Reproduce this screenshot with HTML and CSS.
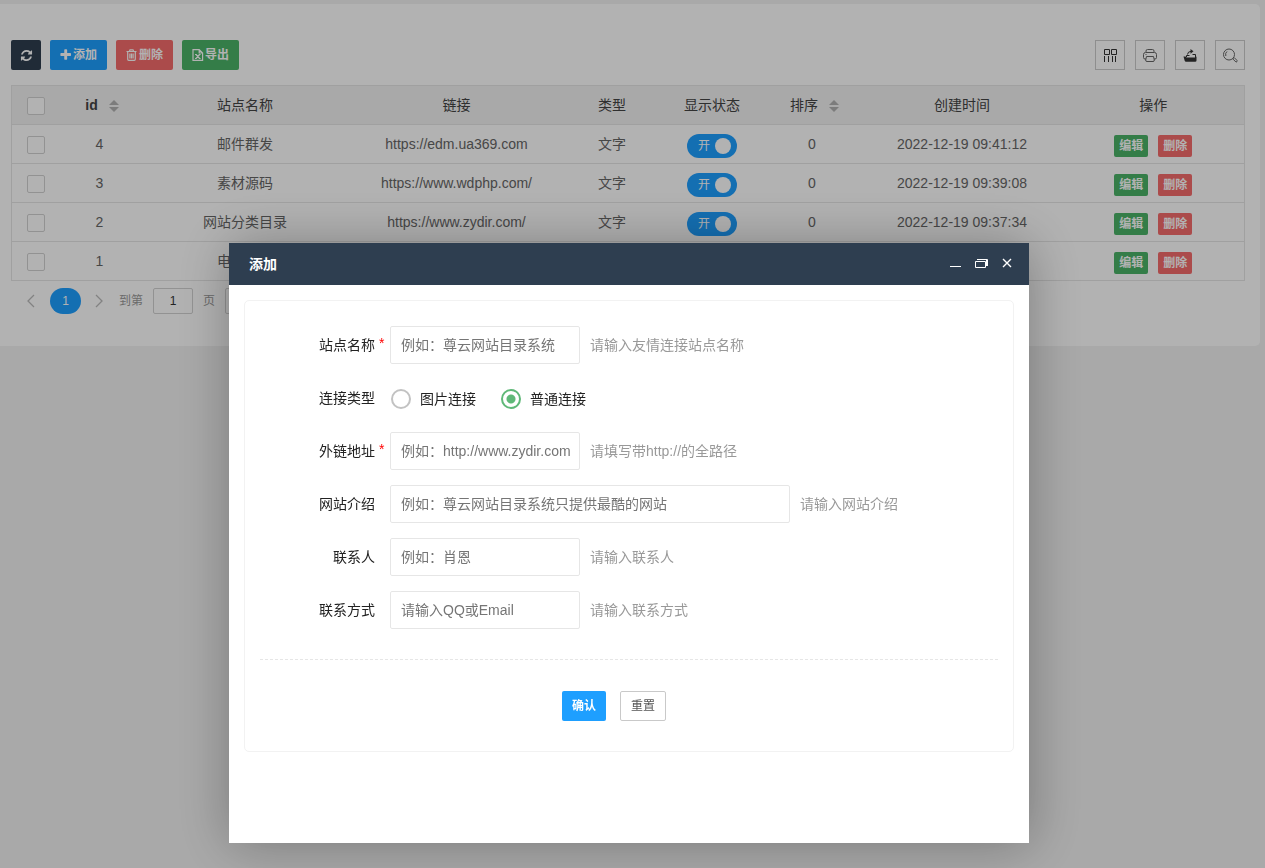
FILE: index.html
```
<!DOCTYPE html>
<html lang="zh-CN">
<head>
<meta charset="utf-8">
<title>添加</title>
<link rel="stylesheet" href="styles.css">
</head>
<body>
<main class="card">
  <div class="toolbar">
    <div class="actions">
      <button class="btn btn-dark" type="button" aria-label="刷新"><svg class="fa" viewBox="0 0 1792 1792"><path d="M1639 1056q0 5-1 7-64 268-268 434.500t-478 166.500q-146 0-282.500-55t-243.500-157l-129 129q-19 19-45 19t-45-19-19-45v-448q0-26 19-45t45-19h448q26 0 45 19t19 45-19 45l-137 137q71 66 161 102t187 36q134 0 250-65t186-179q11-17 53-117 8-23 30-23h192q13 0 22.500 9.500t9.500 22.500zm25-800v448q0 26-19 45t-45 19h-448q-26 0-45-19t-19-45 19-45l138-138q-148-137-349-137-134 0-250 65t-186 179q-11 17-53 117-8 23-30 23h-199q-13 0-22.500-9.500t-9.500-22.500v-7q65-268 270-434.500t480-166.500q146 0 284 55.500t245 156.500l130-129q19-19 45-19t45 19 19 45z"/></svg></button>
      <button class="btn btn-blue" type="button"><svg class="fa" viewBox="140 100 1592 1592"><path d="M1600 736v192q0 40-28 68t-68 28h-416v416q0 40-28 68t-68 28h-192q-40 0-68-28t-28-68v-416h-416q-40 0-68-28t-28-68v-192q0-40 28-68t68-28h416v-416q0-40 28-68t68-28h192q40 0 68 28t28 68v416h416q40 0 68 28t28 68z"/></svg>添加</button>
      <button class="btn btn-red" type="button"><svg class="fa line" viewBox="0 0 12 12"><path d="M.5 2.500h10M3.300 2.500l.7-1.700h3l.7 1.700M1.700 2.500v7.800q0 1 1 1h5.600q1 0 1-1V2.500M3.900 4.500v5M5.500 4.500v5M7.100 4.500v5"/></svg>删除</button>
      <button class="btn btn-green" type="button"><svg class="fa line" viewBox="0 0 12 12"><path d="M1 .6h6.200L10.600 4v7.400H1zM7.200.6V4h3.400M3 5.500h1.800M6.800 5.500h1.800M3 9.500h1.800M6.800 9.500h1.800M4 5.500l3.600 4M7.600 5.500l-3.600 4"/></svg>导出</button>
    </div>
    <div class="tools">
      <button class="tool" type="button" aria-label="筛选列"><svg viewBox="0 0 16 16"><path d="M2.500 2.500h5v5h-5zM9.500 2.500h5v5h-5zM2.500 9v6M6.500 9v6M10.500 9v6M13.500 9v6"/></svg></button>
      <button class="tool" type="button" aria-label="打印"><svg class="soft" viewBox="0 0 16 16"><path d="M4 5v-1q0-1.500 1.500-1.500h5q1.500 0 1.500 1.500v1M4 12H3q-1.500 0-1.500-1.500V7.500q0-2 2-2h9q2 0 2 2v3q0 1.500-1.500 1.500h-1M4.500 9.500h7l.8 3.500q.2 1.500-1.300 1.500H5q-1.500 0-1.300-1.500zM3.500 7.500h1"/></svg></button>
      <button class="tool" type="button" aria-label="导出"><svg viewBox="0 0 16 16"><path class="solid" d="M1.500 9.500h2l1 1H13l1.500-1v4q0 1.300-1.300 1.300H4q-1 0-1.300-1z"/><path d="M4.500 10V8.500h3M10.500 7.500h3V11M5.500 7.500q0-3 4-3.300"/><path class="solid" d="M8.500 2l3 2.300-3 2.500z"/></svg></button>
      <button class="tool" type="button" aria-label="搜索"><svg class="soft" viewBox="0 0 16 16"><circle cx="7" cy="7.500" r="5.500"/><path d="M3.800 9Q3 6 5 4.500M11 11.300l1-.9 3 3q.5 1.500-1 1.700l-3-3z"/></svg></button>
    </div>
  </div>

  <table class="grid">
    <colgroup><col class="c-check"><col class="c-id"><col class="c-name"><col class="c-link"><col class="c-short"><col class="c-state"><col class="c-short"><col class="c-time"><col class="c-ops"></colgroup>
    <thead>
      <tr>
        <th><input class="check" type="checkbox" aria-label="全选"></th>
        <th><span class="sortable"><b>id</b><i class="sort"></i></span></th>
        <th>站点名称</th><th>链接</th><th>类型</th><th>显示状态</th>
        <th><span class="sortable">排序<i class="sort"></i></span></th>
        <th>创建时间</th><th>操作</th>
      </tr>
    </thead>
    <tbody>
      <tr>
        <td><input class="check" type="checkbox" aria-label="选择 4"></td><td>4</td><td>邮件群发</td><td>https://edm.ua369.com</td><td>文字</td>
        <td class="low"><button class="switch" type="button" role="switch" aria-checked="true">开<i></i></button></td><td>0</td><td>2022-12-19 09:41:12</td>
        <td class="low"><div class="ops"><button class="mini btn-green" type="button">编辑</button><button class="mini btn-red" type="button">删除</button></div></td>
      </tr>
      <tr>
        <td><input class="check" type="checkbox" aria-label="选择 3"></td><td>3</td><td>素材源码</td><td>https://www.wdphp.com/</td><td>文字</td>
        <td class="low"><button class="switch" type="button" role="switch" aria-checked="true">开<i></i></button></td><td>0</td><td>2022-12-19 09:39:08</td>
        <td class="low"><div class="ops"><button class="mini btn-green" type="button">编辑</button><button class="mini btn-red" type="button">删除</button></div></td>
      </tr>
      <tr>
        <td><input class="check" type="checkbox" aria-label="选择 2"></td><td>2</td><td>网站分类目录</td><td>https://www.zydir.com/</td><td>文字</td>
        <td class="low"><button class="switch" type="button" role="switch" aria-checked="true">开<i></i></button></td><td>0</td><td>2022-12-19 09:37:34</td>
        <td class="low"><div class="ops"><button class="mini btn-green" type="button">编辑</button><button class="mini btn-red" type="button">删除</button></div></td>
      </tr>
      <tr>
        <td><input class="check" type="checkbox" aria-label="选择 1"></td><td>1</td><td>电影网站</td><td></td><td></td>
        <td></td><td></td><td></td>
        <td class="low"><div class="ops"><button class="mini btn-green" type="button">编辑</button><button class="mini btn-red" type="button">删除</button></div></td>
      </tr>
    </tbody>
  </table>

  <nav class="pager" aria-label="分页">
    <button class="arrow" type="button" aria-label="上一页"><svg viewBox="0 0 9 14"><path d="M8 1L2 7l6 6"/></svg></button>
    <a class="current" href="#">1</a>
    <button class="arrow" type="button" aria-label="下一页"><svg viewBox="0 0 9 14"><path d="M1 1l6 6-6 6"/></svg></button>
    <label class="jump">到第<input type="text" value="1">页</label>
    <button class="go" type="button">确定</button>
  </nav>
</main>

<div class="shade">
  <section class="dialog" role="dialog" aria-labelledby="dialog-title">
    <header class="dialog-head">
      <h2 id="dialog-title">添加</h2>
      <div class="window-tools">
        <button type="button" aria-label="最小化"><svg viewBox="0 0 14 14"><path d="M2 10.500h11"/></svg></button>
        <button type="button" aria-label="还原"><svg viewBox="0 0 14 14"><path d="M1.500 5.500h10v6h-10zM3 3.500h10.500v6.500M12.500 4v6"/></svg></button>
        <button type="button" aria-label="关闭"><svg class="cross" viewBox="0 0 14 14"><path d="M3 3l8 8M11 3l-8 8"/></svg></button>
      </div>
    </header>
    <form class="form">
      <div class="row"><label class="name required" for="site">站点名称</label><input class="field" id="site" type="text" placeholder="例如：尊云网站目录系统"><span class="hint">请输入友情连接站点名称</span></div>
      <div class="row" role="radiogroup" aria-label="连接类型"><span class="name">连接类型</span><label class="radio"><input type="radio" name="kind">图片连接</label><label class="radio"><input type="radio" name="kind" checked>普通连接</label></div>
      <div class="row"><label class="name required" for="url">外链地址</label><input class="field" id="url" type="text" placeholder="例如：http://www.zydir.com"><span class="hint">请填写带http://的全路径</span></div>
      <div class="row"><label class="name" for="intro">网站介绍</label><input class="field wide" id="intro" type="text" placeholder="例如：尊云网站目录系统只提供最酷的网站"><span class="hint">请输入网站介绍</span></div>
      <div class="row"><label class="name" for="person">联系人</label><input class="field" id="person" type="text" placeholder="例如：肖恩"><span class="hint">请输入联系人</span></div>
      <div class="row"><label class="name" for="contact">联系方式</label><input class="field" id="contact" type="text" placeholder="请输入QQ或Email"><span class="hint">请输入联系方式</span></div>
      <hr>
      <div class="submit"><button class="btn btn-blue" type="submit">确认</button><button class="btn reset" type="reset">重置</button></div>
    </form>
  </section>
</div>
</body>
</html>
```
FILE: styles.css
```
*, *::before, *::after { box-sizing: border-box; }
body {
  margin: 0;
  padding: 4px 5px 0 0;
  background: #f2f2f2;
  color: #444;
  font: 14px/24px "Liberation Sans", "Noto Sans CJK SC", sans-serif;
}
button, input { font: inherit; margin: 0; }
button { padding: 0; border: 0; cursor: pointer; }
svg { display: block; fill: none; stroke: currentColor; }

.card {
  padding: 36px 15px 32px 11px;
  background: #fff;
  border-radius: 0 5px 5px 0;
}
.toolbar { display: flex; justify-content: space-between; margin-bottom: 15px; }
.actions { display: flex; gap: 9px; }
.tools { display: flex; gap: 10px; }
.btn {
  display: flex;
  align-items: center;
  justify-content: center;
  gap: 1px;
  height: 30px;
  padding: 0 10px;
  border-radius: 2px;
  color: #fff;
  font-size: 12px;
  font-weight: 700;
}
.btn-dark { width: 30px; padding: 0; background: #2e3e50; }
.btn-blue { background: #1e9fff; }
.btn-red { background: #f56c6c; }
.btn-green { background: #4bb368; }
.fa { width: 12px; height: 12px; fill: currentColor; stroke: none; }
.btn-dark .fa { width: 13px; height: 13px; }
.fa.line { fill: none; stroke: currentColor; stroke-width: 1.2; }
.tool {
  display: grid;
  place-items: center;
  width: 30px;
  height: 30px;
  border: 1px solid #ccc;
  background: none;
  color: #333;
}
.tool svg { width: 16px; height: 16px; }
.tool .soft { color: #666; }
.solid { fill: currentColor; stroke: none; }

.grid {
  width: 100%;
  table-layout: fixed;
  border-collapse: collapse;
  border: 1px solid #e6e6e6;
  text-align: center;
}
.c-check { width: 48px; }
.c-id { width: 80px; }
.c-name { width: 211px; }
.c-link { width: 212px; }
.c-short { width: 99px; }
.c-state { width: 101px; }
.c-time { width: 201px; }
.c-ops { width: 182px; }
.grid th, .grid td { height: 39px; padding: 0; border-bottom: 1px solid #e6e6e6; font-weight: 400; }
.grid thead { background: #f2f2f2; }
.grid td { color: #666; }
.grid .low { padding-top: 4px; }
.check {
  display: block;
  appearance: none;
  width: 18px;
  height: 18px;
  margin: 2px auto 0;
  border: 1px solid #d2d2d2;
  border-radius: 2px;
  background: #fff;
}
.sortable { display: inline-flex; align-items: center; gap: 11px; padding-left: 5px; }
.sort { display: grid; gap: 2px; padding-top: 2px; }
.sort::before, .sort::after { content: ""; border: 5px solid transparent; }
.sort::before { border-top: 0; border-bottom-color: #b2b2b2; }
.sort::after { border-bottom: 0; border-top-color: #b2b2b2; }
.switch {
  display: flex;
  align-items: center;
  justify-content: space-between;
  width: 50px;
  height: 24px;
  margin: 0 auto;
  padding: 0 6px 0 11px;
  border-radius: 12px;
  background: #1e9fff;
  color: #fff;
  font-size: 12px;
}
.switch i { width: 16px; height: 16px; border-radius: 50%; background: #fff; }
.ops { display: flex; justify-content: center; gap: 10px; }
.mini {
  height: 22px;
  padding: 0 5px;
  border-radius: 2px;
  color: #fff;
  font-size: 12px;
  font-weight: 700;
  line-height: 22px;
}

.pager { display: flex; align-items: center; margin-top: 7px; padding-left: 15px; color: #999; font-size: 12px; }
.arrow { width: 9px; background: none; color: #bbb; }
.arrow svg { width: 9px; height: 14px; stroke-width: 1.3; }
.current {
  width: 31px;
  height: 26px;
  margin: 0 14px 0 15px;
  border-radius: 13px;
  background: #1e9fff;
  color: #fff;
  line-height: 26px;
  text-align: center;
  text-decoration: none;
}
.jump { display: flex; align-items: center; gap: 10px; margin: 0 10px 0 15px; }
.jump input { width: 40px; height: 26px; padding: 0; border: 1px solid #d2d2d2; border-radius: 2px; color: #333; background: #fff; text-align: center; }
.go { height: 26px; padding: 0 10px; border: 1px solid #d2d2d2; border-radius: 2px; background: #fff; color: #333; }

.shade {
  position: fixed;
  inset: 0;
  display: flex;
  align-items: flex-end;
  justify-content: center;
  padding: 0 7px 25px 0;
  background: rgba(0, 0, 0, .3);
}
.dialog {
  width: 800px;
  max-width: 100%;
  min-height: 600px;
  background: #fff;
  box-shadow: 1px 1px 50px rgba(0, 0, 0, .3);
}
.dialog-head { display: flex; align-items: center; justify-content: space-between; height: 42px; padding: 0 15px 0 20px; background: #2e3e50; color: #fff; }
.dialog-head h2 { margin: 0; font-size: 14px; }
.window-tools { display: flex; gap: 12px; padding-bottom: 2px; }
.window-tools button { background: none; color: inherit; }
.window-tools svg { width: 14px; height: 14px; }
.cross { stroke-width: 1.4; }

.form { margin: 15px; padding: 25px 15px 30px; border: 1px solid #f2f2f2; border-radius: 5px; color: #222; }
.row { display: flex; align-items: center; min-height: 38px; margin-bottom: 15px; }
.name { display: flex; justify-content: flex-end; width: 130px; }
.name::after { content: ""; width: 15px; padding-left: 4px; line-height: 20px; }
.required::after { content: "*"; color: #f00; }
.field { width: 190px; height: 38px; padding: 0 0 0 10px; border: 1px solid #e6e6e6; border-radius: 2px; background: #fff; color: #333; }
.field.wide { width: 400px; }
.field::placeholder { color: #757575; }
.hint { margin-left: 10px; color: #999; }
.radio { display: flex; align-items: center; gap: 9px; margin: 1px 24px 0 1px; }
.radio input { appearance: none; width: 20px; height: 20px; border: 2px solid #c2c2c2; border-radius: 50%; }
.radio input:checked { border-color: #5fb878; background: radial-gradient(circle, #5fb878 4px, transparent 5px); }
.form hr { margin: 30px 0 31px; border: 0; border-top: 1px dashed #e6e6e6; }
.submit { display: flex; justify-content: center; gap: 14px; padding-right: 30px; }
.reset { border: 1px solid #c9c9c9; background: #fff; color: #555; font-weight: 400; }
```
